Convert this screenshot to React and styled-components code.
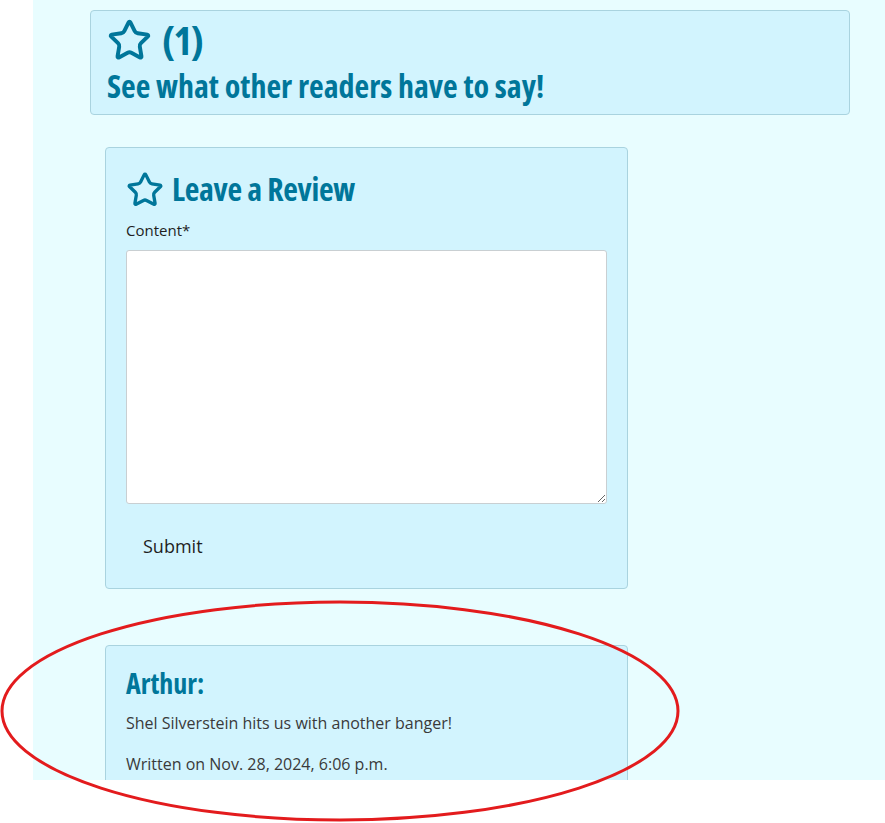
import styled, { createGlobalStyle } from "styled-components";
import { Star } from "lucide-react";

const Global = createGlobalStyle`
  body {
    margin: 0;
    background: #fff;
    font-family: "Open Sans", "Noto Sans", sans-serif;
    color: #333;
  }
`;

const Page = styled.div`
  position: relative;
  width: 885px;
  height: 823px;
  overflow: hidden;
`;

const Main = styled.main`
  margin-left: 33px;
  height: 780px;
  overflow: hidden;
  background: #e8fdff;
  padding-top: 10px;
  box-sizing: border-box;
`;

const Card = styled.section`
  box-sizing: border-box;
  background: #d2f4fe;
  border: 1px solid #a9d3df;
  border-radius: 4px;
  margin-left: ${(p) => p.$left}px;
  width: ${(p) => p.$width}px;
  padding: ${(p) => p.$pad};
  margin-bottom: ${(p) => p.$gap || 0}px;
`;

const Heading = styled.h2`
  display: flex;
  align-items: center;
  gap: ${(p) => p.$gap || 10}px;
  margin: 0 0 ${(p) => p.$mb || 0}px;
  font-family: "Open Sans", sans-serif;
  font-stretch: condensed;
  font-weight: 700;
  font-size: ${(p) => p.$size}px;
  line-height: ${(p) => p.$lh || 1.2};
  letter-spacing: ${(p) => p.$ls || 0}px;
  color: #00769a;
  white-space: nowrap;
`;

const Label = styled.label`
  display: block;
  font-size: 15px;
  line-height: 20px;
  color: #1f1f1f;
  margin-bottom: 10px;
`;

const TextArea = styled.textarea`
  display: block;
  box-sizing: border-box;
  width: 100%;
  height: 254px;
  margin: 0;
  background: #fff;
  border: 1px solid #c9cfd2;
  border-radius: 3px;
  font-family: "Open Sans", sans-serif;
  font-size: 16px;
`;

const SubmitButton = styled.button`
  display: block;
  margin-top: 22px;
  padding: 7px 17px;
  background: transparent;
  border: none;
  font-family: "Open Sans", sans-serif;
  font-size: 18px;
  line-height: 26px;
  color: #1f1f1f;
  cursor: pointer;
`;

const Text = styled.p`
  margin: 0 0 ${(p) => p.$mb || 0}px;
  font-size: 16px;
  line-height: 24px;
  color: #3a3a3a;
`;

const Annotation = styled.svg`
  position: absolute;
  left: 0;
  top: 0;
  pointer-events: none;
`;

export default function App() {
  return (
    <Page>
      <Global />
      <Main>
        <Card $left={57} $width={760} $pad="5px 16px 9px 16px" $gap={32}>
          <Heading $size={40} $gap={10} $ls={-1} $mb={3}>
            <Star size={45} strokeWidth={2.1} />
            (1)
          </Heading>
          <Heading $size={32}>See what other readers have to say!</Heading>
        </Card>

        <Card $left={72} $width={523} $pad="22px 20px 22px" $gap={56}>
          <Heading $size={32} $gap={8} $mb={11} $ls={-0.3}>
            <Star size={38} strokeWidth={2.1} />
            Leave a Review
          </Heading>
          <Label htmlFor="content">Content*</Label>
          <TextArea id="content" />
          <SubmitButton type="button">Submit</SubmitButton>
        </Card>

        <Card $left={72} $width={523} $pad="21px 20px 20px">
          <Heading $size={28} $mb={11}>Arthur:</Heading>
          <Text $mb={17}>Shel Silverstein hits us with another banger!</Text>
          <Text>Written on Nov. 28, 2024, 6:06 p.m.</Text>
        </Card>
      </Main>

      <Annotation width="885" height="823" viewBox="0 0 885 823">
        <ellipse
          cx="340"
          cy="711"
          rx="338"
          ry="109"
          fill="none"
          stroke="#e31b1d"
          strokeWidth="3"
        />
      </Annotation>
    </Page>
  );
}
